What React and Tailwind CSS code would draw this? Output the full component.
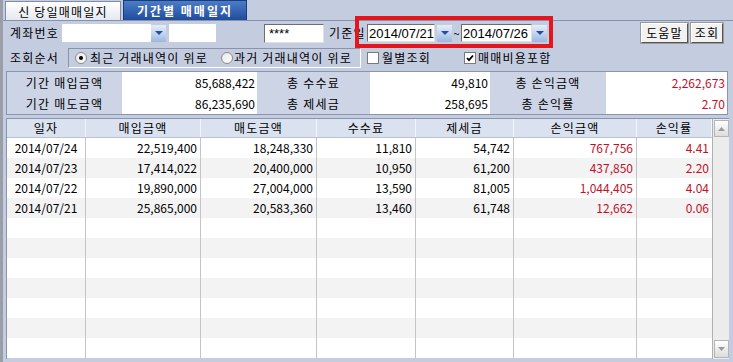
import React from "react";

const rows = [
  ["2014/07/24", "22,519,400", "18,248,330", "11,810", "54,742", "767,756", "4.41"],
  ["2014/07/23", "17,414,022", "20,400,000", "10,950", "61,200", "437,850", "2.20"],
  ["2014/07/22", "19,890,000", "27,004,000", "13,590", "81,005", "1,044,405", "4.04"],
  ["2014/07/21", "25,865,000", "20,583,360", "13,460", "61,748", "12,662", "0.06"],
];

const cols = [
  { title: "일자", w: "w-[79px]", align: "justify-center" },
  { title: "매입금액", w: "w-[115px]", align: "justify-end" },
  { title: "매도금액", w: "w-[116px]", align: "justify-end" },
  { title: "수수료", w: "w-[99px]", align: "justify-end" },
  { title: "제세금", w: "w-[98px]", align: "justify-end" },
  { title: "손익금액", w: "w-[123px]", align: "justify-end", red: true },
  { title: "손익률", w: "w-[75px]", align: "justify-end", red: true },
];

function DropBtn() {
  return (
    <div className="w-[15px] h-[17px] flex items-center justify-center bg-linear-to-b from-[#e6eef9] via-[#c3d4ee] to-[#9db6de]">
      <svg width="8" height="4" viewBox="0 0 8 4">
        <path d="M0 0h8L4 4z" fill="#23509c" />
      </svg>
    </div>
  );
}

function Radio({ checked }) {
  return (
    <span className="w-[12px] h-[12px] rounded-full border border-[#8c8c8c] bg-linear-to-br from-[#e8e8e8] to-white flex items-center justify-center">
      {checked && <span className="w-[4px] h-[4px] rounded-full bg-black" />}
    </span>
  );
}

function Check({ checked }) {
  return (
    <span className="w-[12px] h-[12px] border border-[#7a7a7a] bg-white flex items-center justify-center">
      {checked && (
        <svg width="8" height="8" viewBox="0 0 8 8">
          <path d="M1 4l2 2.2L7 1.5" stroke="#000" strokeWidth="1.8" fill="none" />
        </svg>
      )}
    </span>
  );
}

function SumLabel({ children, w }) {
  return (
    <div className={`${w} h-[21px] flex items-center justify-center bg-[#ccd4e6]`}>
      {children}
    </div>
  );
}

function SumValue({ children, w, red }) {
  return (
    <div className={`${w} h-[21px] flex items-center justify-end pr-[2px] bg-white tracking-normal ${red ? "text-[#c0102a]" : ""}`}>
      {children}
    </div>
  );
}

export default function App() {
  return (
    <div className="relative w-[733px] h-[362px] overflow-hidden bg-[#c4cce0] text-[12px] text-black font-['Noto_Sans_CJK_KR',sans-serif] leading-none tracking-[1.2px]">
      <div className="flex h-full">
        {/* left window edge */}
        <div className="w-[3px] h-full bg-[#9a9ea8]" />

        <div className="flex-1 flex flex-col">
          {/* tabs */}
          <div className="h-[21px] flex items-end gap-[2px] pl-[2px] border-b border-[#8592ae]">
            <div className="w-[116px] h-[19px] flex items-center justify-center bg-linear-to-b from-white to-[#e4e8f0] border border-b-0 border-[#7f8daa] pt-[1px]">
              신 당일매매일지
            </div>
            <div className="w-[124px] h-[20px] flex items-center justify-center bg-linear-to-b from-[#4c7cc8] to-[#1f4d9c] border border-b-0 border-[#1a3c78] text-white font-bold tracking-[2px] pt-[1px]">
              기간별 매매일지
            </div>
          </div>

          {/* row 1 */}
          <div className="h-[18px] mt-[3px] flex items-center">
            <span className="ml-[7px] w-[52px]">계좌번호</span>
            <div className="w-[89px] h-[18px] bg-white" />
            <DropBtn />
            <div className="ml-[3px] w-[47px] h-[18px] bg-white" />
            <div className="ml-[48px] w-[60px] h-[19px] bg-white border border-t-[#6e6e6e] border-l-[#6e6e6e] border-r-[#e0e0e0] border-b-[#e0e0e0] flex items-center pl-[4px] font-['Liberation_Sans',sans-serif] text-[13px] tracking-normal">
              ****
            </div>
            <span className="ml-[5px] w-[38px]">기준일</span>
            <div className="w-[68px] h-[18px] bg-white border border-t-[#6e6e6e] border-l-[#6e6e6e] border-r-[#e0e0e0] border-b-[#e0e0e0] flex items-center pl-[1px] font-['Liberation_Sans',sans-serif] text-[13px] tracking-normal">
              2014/07/21
            </div>
            <div className="ml-[2px]">
              <DropBtn />
            </div>
            <span className="w-[9px] text-center text-[11px] tracking-normal">~</span>
            <div className="w-[71px] h-[18px] bg-white border border-t-[#6e6e6e] border-l-[#6e6e6e] border-r-[#e0e0e0] border-b-[#e0e0e0] flex items-center pl-[1px] font-['Liberation_Sans',sans-serif] text-[13px] tracking-normal">
              2014/07/26
            </div>
            <DropBtn />
            <div className="flex-1" />
            <button className="w-[47px] h-[20px] flex items-center justify-center bg-[#f2f2f2] border border-t-white border-l-white border-r-[#555] border-b-[#555] outline outline-1 outline-[#9a9a9a]">
              도움말
            </button>
            <button className="ml-[3px] mr-[10px] w-[32px] h-[20px] flex items-center justify-center bg-[#f2f2f2] border border-t-white border-l-white border-r-[#555] border-b-[#555] outline outline-1 outline-[#9a9a9a]">
              조회
            </button>
          </div>

          {/* row 2 */}
          <div className="h-[20px] mt-[6px] flex items-center">
            <span className="ml-[7px] w-[58px]">조회순서</span>
            <div className="w-[293px] h-[20px] flex items-center border border-t-[#8a93a8] border-l-[#8a93a8] border-r-white border-b-white">
              <span className="ml-[6px]">
                <Radio checked />
              </span>
              <span className="ml-[3px] w-[131px]">최근 거래내역이 위로</span>
              <Radio />
              <span className="ml-[1px]">과거 거래내역이 위로</span>
            </div>
            <span className="ml-[6px]">
              <Check />
            </span>
            <span className="ml-[3px] w-[82px]">월별조회</span>
            <Check checked />
            <span className="ml-[2px]">매매비용포함</span>
          </div>

          {/* summary */}
          <div className="mt-[3px] ml-[3px] w-[722px] border border-[#8a94ac] flex flex-col">
            <div className="flex">
              <SumLabel w="w-[115px]">기간 매입금액</SumLabel>
              <SumValue w="w-[135px]">85,688,422</SumValue>
              <SumLabel w="w-[113px]">총 수수료</SumLabel>
              <SumValue w="w-[120px]">49,810</SumValue>
              <SumLabel w="w-[116px]">총 손익금액</SumLabel>
              <SumValue w="w-[121px]" red>2,262,673</SumValue>
            </div>
            <div className="flex">
              <SumLabel w="w-[115px]">기간 매도금액</SumLabel>
              <SumValue w="w-[135px]">86,235,690</SumValue>
              <SumLabel w="w-[113px]">총 제세금</SumLabel>
              <SumValue w="w-[120px]">258,695</SumValue>
              <SumLabel w="w-[116px]">총 손익률</SumLabel>
              <SumValue w="w-[121px]" red>2.70</SumValue>
            </div>
          </div>

          {/* grid */}
          <div className="mt-[3px] ml-[3px] w-[723px] h-[241px] flex border-l border-t border-[#8a94ac]">
            <div className="flex flex-col">
              <div className="h-[19px] flex bg-[#dbe2ef] border-b border-[#b8c2d6]">
                {cols.map((c) => (
                  <div key={c.title} className={`${c.w} h-full flex items-center justify-center border-r border-[#f4f6fa]`}>
                    {c.title}
                  </div>
                ))}
              </div>
              {Array.from({ length: 11 }).map((_, i) => (
                <div key={i} className={`h-[20px] flex tracking-normal ${i % 2 ? "bg-[#f3f3f3]" : "bg-white"}`}>
                  {cols.map((c, j) => (
                    <div
                      key={j}
                      className={`${c.w} h-full flex items-center ${c.align} ${j === 0 ? "" : "pr-[3px]"} ${c.red ? "text-[#c0102a]" : ""} ${j < 6 ? "border-r border-[#c4c4c4]" : ""}`}
                    >
                      {rows[i] ? rows[i][j] : ""}
                    </div>
                  ))}
                </div>
              ))}
            </div>

            {/* scrollbar */}
            <div className="w-[17px] h-[240px] bg-[#ececec] border-l border-[#b0b0b0] flex flex-col justify-between py-[1px] pl-[1px]">
              <div className="w-[15px] h-[17px] bg-linear-to-b from-white to-[#dcdcdc] border border-[#b4b4b4] flex items-center justify-center">
                <svg width="7" height="4" viewBox="0 0 7 4">
                  <path d="M0 4h7L3.5 0z" fill="#9a9a9a" />
                </svg>
              </div>
              <div className="w-[15px] h-[18px] bg-linear-to-b from-white to-[#dcdcdc] border border-[#b4b4b4] flex items-center justify-center">
                <svg width="7" height="4" viewBox="0 0 7 4">
                  <path d="M0 0h7L3.5 4z" fill="#9a9a9a" />
                </svg>
              </div>
            </div>
          </div>
        </div>
      </div>

      {/* red highlight box */}
      <div className="absolute left-[355px] top-[16px] w-[198px] h-[32px] border-4 border-[#e3151d]" />
    </div>
  );
}
